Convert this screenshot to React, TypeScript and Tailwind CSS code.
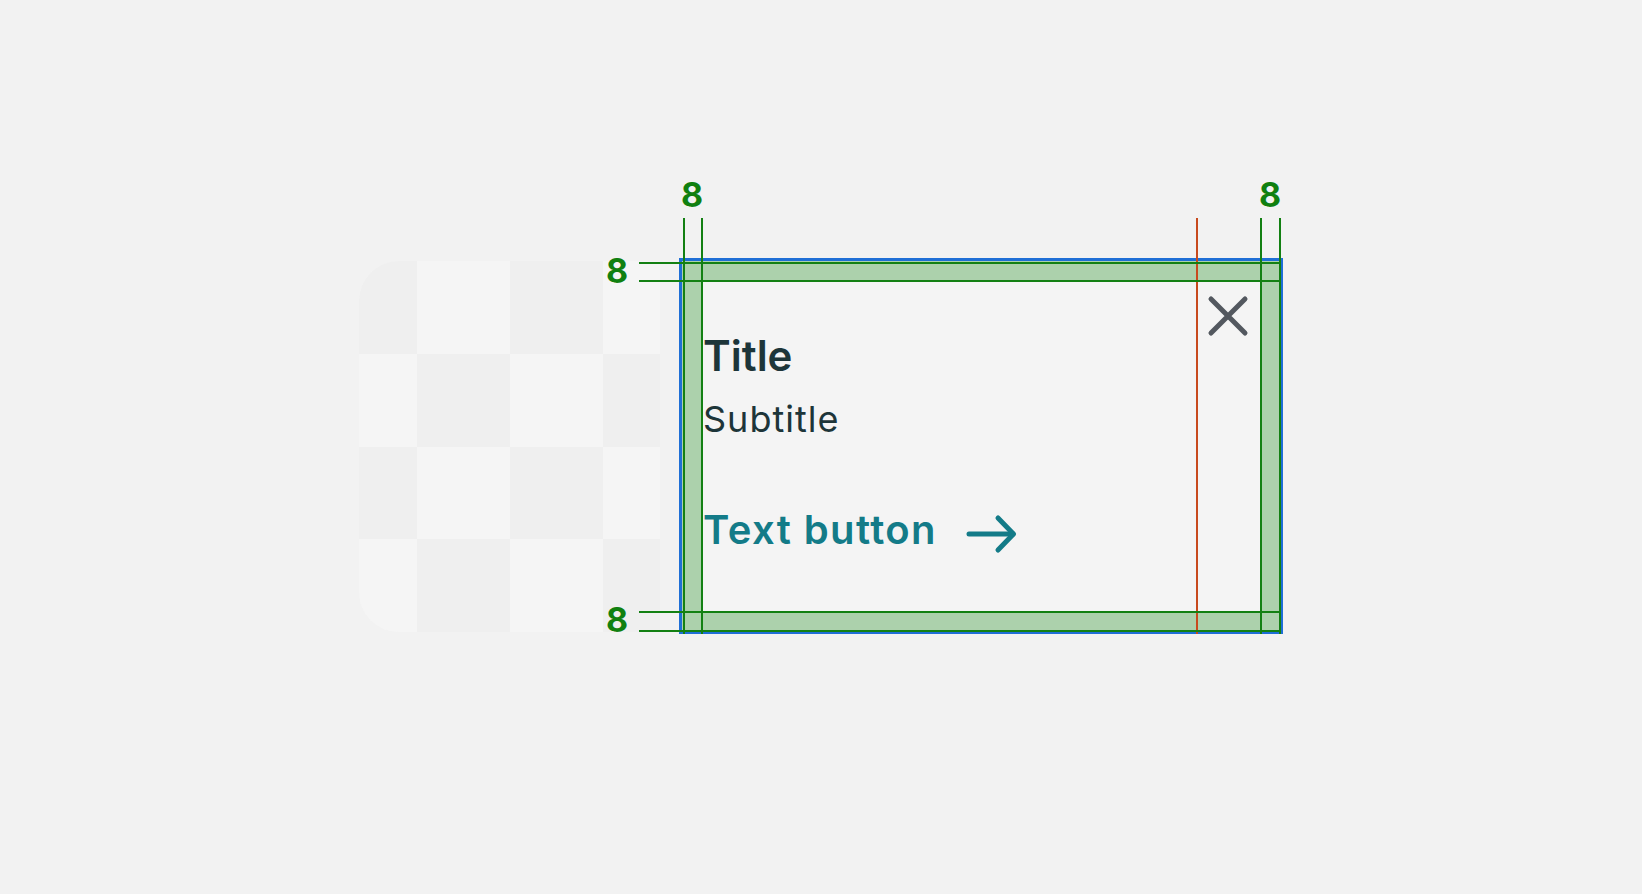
import React from "react";

const cols = [58, 93, 93, 57];
const rows = [93, 93, 92, 93];

function Checker() {
  return (
    <div className="mt-[3px] w-[301px] h-[371px] rounded-l-[40px] overflow-hidden flex flex-col bg-[#f4f4f4]">
      {rows.map((h, r) => (
        <div key={r} className="flex" style={{ height: h }}>
          {cols.map((w, c) => (
            <div
              key={c}
              style={{ width: w }}
              className={(r + c) % 2 === 0 ? "h-full bg-[#efefef]" : "h-full bg-[#f5f5f5]"}
            />
          ))}
        </div>
      ))}
    </div>
  );
}

function Card() {
  return (
    <div className="relative ml-[19px] w-[604px] h-[376px]">
      <div className="w-full h-full border-[3px] border-[#1f6fd6] bg-[#acd1ac] p-[20px]">
        <div className="w-full h-full bg-[#f4f4f4] flex">
          <div className="flex-1 flex flex-col pl-[1px]">
            <div className="mt-[51px] text-[42px] leading-[48px] font-semibold text-[#1d3539] font-['Inter',sans-serif]">
              Title
            </div>
            <div className="mt-[17px] text-[36px] leading-[44px] tracking-[1px] text-[#1d3539] font-['Inter',sans-serif]">
              Subtitle
            </div>
            <div className="mt-[65px] flex items-center">
              <span className="text-[40px] leading-[44px] tracking-[1.4px] font-semibold text-[#137b88] font-['Inter',sans-serif]">
                Text button
              </span>
              <svg width="52" height="40" viewBox="0 0 52 40" className="ml-[29px] mt-[8px]" fill="none">
                <path d="M3 20 H47" stroke="#137b88" strokeWidth="5" strokeLinecap="round" />
                <path d="M32 4 L47.5 20 L32 36" stroke="#137b88" strokeWidth="5" strokeLinecap="round" strokeLinejoin="round" />
              </svg>
            </div>
          </div>
          <div className="w-[64px] flex justify-center pt-[14px]">
            <svg width="42" height="42" viewBox="0 0 42 42" fill="none">
              <path d="M4 4 L38 38 M38 4 L4 38" stroke="#53585f" strokeWidth="5" strokeLinecap="round" />
            </svg>
          </div>
        </div>
      </div>

      {/* red guide */}
      <div className="absolute left-[517px] top-[-40px] w-[2px] h-[416px] bg-[#c84a1e]" />

      {/* vertical green guides */}
      <div className="absolute left-[4px] top-[-40px] w-[2px] h-[416px] bg-[#138013]" />
      <div className="absolute left-[22px] top-[-40px] w-[2px] h-[416px] bg-[#138013]" />
      <div className="absolute left-[581px] top-[-40px] w-[2px] h-[416px] bg-[#138013]" />
      <div className="absolute left-[600px] top-[-40px] w-[2px] h-[416px] bg-[#138013]" />

      {/* horizontal green guides */}
      <div className="absolute left-[-40px] top-[4px] w-[642px] h-[2px] bg-[#138013]" />
      <div className="absolute left-[-40px] top-[22px] w-[642px] h-[2px] bg-[#138013]" />
      <div className="absolute left-[-40px] top-[353px] w-[642px] h-[2px] bg-[#138013]" />
      <div className="absolute left-[-40px] top-[372px] w-[642px] h-[2px] bg-[#138013]" />

      {/* labels */}
      <div className="absolute left-[-7px] top-[-80px] w-[40px] text-center text-[34px] leading-[34px] font-bold text-[#108010] font-['Inter',sans-serif]">8</div>
      <div className="absolute left-[571px] top-[-80px] w-[40px] text-center text-[34px] leading-[34px] font-bold text-[#108010] font-['Inter',sans-serif]">8</div>
      <div className="absolute left-[-82px] top-[-4px] w-[40px] text-center text-[34px] leading-[34px] font-bold text-[#108010] font-['Inter',sans-serif]">8</div>
      <div className="absolute left-[-82px] top-[345px] w-[40px] text-center text-[34px] leading-[34px] font-bold text-[#108010] font-['Inter',sans-serif]">8</div>
    </div>
  );
}

export default function App() {
  return (
    <div className="w-full min-h-[894px] bg-[#f2f2f2] pl-[359px] pt-[258px]">
      <div className="flex items-start">
        <Checker />
        <Card />
      </div>
    </div>
  );
}
